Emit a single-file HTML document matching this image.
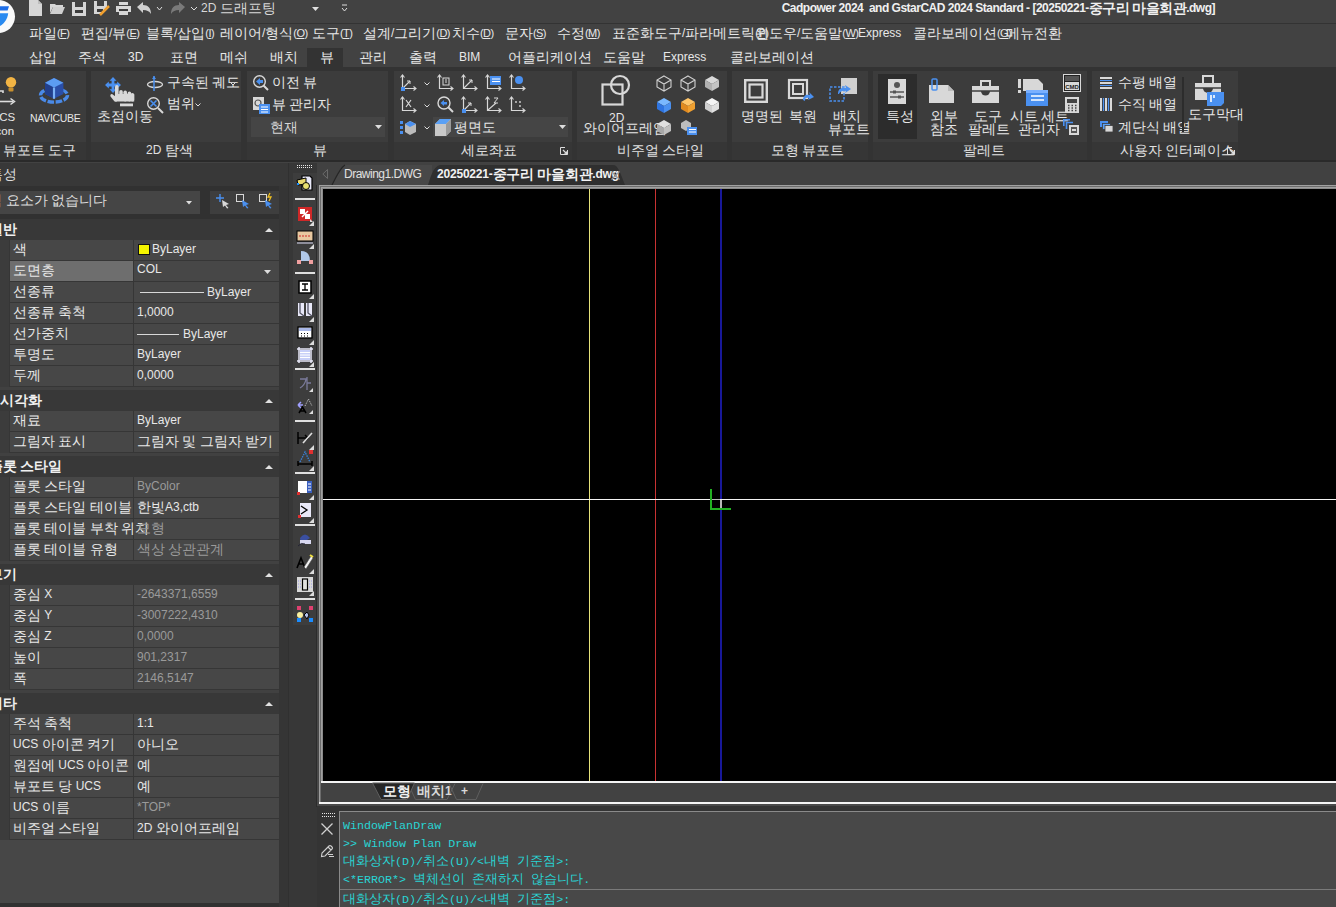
<!DOCTYPE html>
<html><head><meta charset="utf-8">
<style>
*{box-sizing:border-box;margin:0;padding:0}
html,body{width:1336px;height:907px;overflow:hidden;background:#3d3d3d}
body{position:relative;font-family:"Liberation Sans",sans-serif;color:#e6e6e6;font-size:12px}
.a{position:absolute}
.t{position:absolute;white-space:nowrap;line-height:1}
svg{position:absolute;overflow:visible}
.k{font-size:1.15em;line-height:0;position:relative;top:1px}
.km{font-family:'Liberation Sans',sans-serif;font-size:13.4px;line-height:0}
.m{font-family:"Liberation Mono",monospace}
</style></head><body>

<div class="a" style="left:0px;top:0px;width:1336px;height:23px;background:#424242;"></div>
<div class="a" style="left:0px;top:23px;width:1336px;height:1px;background:#333333;"></div>
<div class="a" style="left:0px;top:24px;width:1336px;height:43px;background:#424242;"></div>
<svg style="left:0px;top:0px" width="20" height="36" viewBox="0 0 20 36"><circle cx="-1.5" cy="16.5" r="16.5" fill="#fafafa"/><path d="M-8 6.2 H9 L7.6 10.6 H-8 Z" fill="#1f6fe8"/><path d="M-8 13.2 H8.2 C7.5 19 4 24 -1 26.5 H-8 Z" fill="#2a8af0"/></svg>
<svg style="left:29px;top:0px" width="14" height="16" viewBox="0 0 14 16"><path d="M0 0 H9 L13 4 V16 H0 Z" fill="#d6d6d6"/><path d="M9 0 V4 H13" fill="#bdbdbd"/></svg>
<svg style="left:50px;top:3px" width="15" height="11" viewBox="0 0 15 11"><path d="M0 1 H5 L6 2 H13 V4 H3 L0 10 Z" fill="#d6d6d6"/><path d="M3 4 H15 L12 11 H0 Z" fill="#cfcfcf"/></svg>
<svg style="left:72px;top:2px" width="15" height="14" viewBox="0 0 15 14"><path d="M0 0 H3 V5 H11 V0 H14 V14 H0 Z" fill="#d6d6d6"/><rect x="3" y="8" width="8" height="3" fill="#3c3c3c"/></svg>
<svg style="left:94px;top:1px" width="15" height="14" viewBox="0 0 15 14"><path d="M0 0 H3 V5 H10 V0 H13 V8 L8 13 H0 Z" fill="#d6d6d6"/><rect x="3" y="8" width="6" height="3" fill="#3c3c3c"/><path d="M6 14 L15 5" stroke="#f0a030" stroke-width="2.5"/></svg>
<svg style="left:116px;top:2px" width="15" height="13" viewBox="0 0 15 13"><rect x="3" y="0" width="9" height="3" fill="#d6d6d6"/><rect x="0" y="4" width="15" height="6" fill="#d6d6d6"/><rect x="3" y="7" width="9" height="2" fill="#3c3c3c"/><rect x="3" y="10" width="9" height="3" fill="#d6d6d6"/></svg>
<svg style="left:137px;top:2px" width="15" height="12" viewBox="0 0 15 12"><path d="M0 5 L6 0 V3 C11 3 14 6 14 12 C12 9 10 8 6 8 V11 Z" fill="#cfcfcf"/></svg>
<svg style="left:157px;top:7px" width="5" height="4" viewBox="0 0 5 4"><path d="M0 0 L2.5 3 L5 0" stroke="#ddd" fill="none" stroke-width="1"/></svg>
<svg style="left:170px;top:2px" width="15" height="12" viewBox="0 0 15 12"><path d="M15 5 L9 0 V3 C4 3 1 6 1 12 C3 9 5 8 9 8 V11 Z" fill="#7a7a7a"/></svg>
<svg style="left:191px;top:7px" width="6" height="4" viewBox="0 0 6 4"><path d="M0 0 L3 3 L6 0" stroke="#ddd" fill="none" stroke-width="1"/></svg>
<div class="a" style="left:199px;top:0px;width:126px;height:18px;background:#424242;"></div>
<div class="t" style="left:201px;top:2px;font-size:12px;color:#d8d8d8;font-weight:normal;">2D <span class="k">드래프팅</span></div>
<svg style="left:312px;top:7px" width="7" height="4" viewBox="0 0 7 4"><path d="M0 0 H7 L3.5 4 Z" fill="#e0e0e0"/></svg>
<svg style="left:342px;top:5px" width="5" height="8" viewBox="0 0 5 8"><path d="M0 0 H5 M0 3 L2.5 6 L5 3" stroke="#ddd" fill="none" stroke-width="1"/></svg>
<div class="t" style="right:121px;top:2px;font-size:12px;color:#f0f0f0;font-weight:bold;letter-spacing:-0.5px">Cadpower 2024&nbsp; and GstarCAD 2024 Standard - [20250221-<span class="k">중구리</span> <span class="k">마을회관</span>.dwg]</div>
<div class="t" style="left:29px;top:27px;font-size:12px;color:#e8e8e8;font-weight:normal;"><span class="k">파일</span><span style="font-size:11px;letter-spacing:-0.6px">(<u>F</u>)</span></div>
<div class="t" style="left:81px;top:27px;font-size:12px;color:#e8e8e8;font-weight:normal;"><span class="k">편집</span>/<span class="k">뷰</span><span style="font-size:11px;letter-spacing:-0.6px">(<u>E</u>)</span></div>
<div class="t" style="left:146px;top:27px;font-size:12px;color:#e8e8e8;font-weight:normal;"><span class="k">블록</span>/<span class="k">삽입</span><span style="font-size:11px;letter-spacing:-0.6px">(<u>I</u>)</span></div>
<div class="t" style="left:220px;top:27px;font-size:12px;color:#e8e8e8;font-weight:normal;"><span class="k">레이어</span>/<span class="k">형식</span><span style="font-size:11px;letter-spacing:-0.6px">(<u>O</u>)</span></div>
<div class="t" style="left:312px;top:27px;font-size:12px;color:#e8e8e8;font-weight:normal;"><span class="k">도구</span><span style="font-size:11px;letter-spacing:-0.6px">(<u>T</u>)</span></div>
<div class="t" style="left:363px;top:27px;font-size:12px;color:#e8e8e8;font-weight:normal;"><span class="k">설계</span>/<span class="k">그리기</span><span style="font-size:11px;letter-spacing:-0.6px">(<u>D</u>)</span></div>
<div class="t" style="left:452px;top:27px;font-size:12px;color:#e8e8e8;font-weight:normal;"><span class="k">치수</span><span style="font-size:11px;letter-spacing:-0.6px">(<u>D</u>)</span></div>
<div class="t" style="left:505px;top:27px;font-size:12px;color:#e8e8e8;font-weight:normal;"><span class="k">문자</span><span style="font-size:11px;letter-spacing:-0.6px">(<u>S</u>)</span></div>
<div class="t" style="left:557px;top:27px;font-size:12px;color:#e8e8e8;font-weight:normal;"><span class="k">수정</span><span style="font-size:11px;letter-spacing:-0.6px">(<u>M</u>)</span></div>
<div class="t" style="left:612px;top:27px;font-size:12px;color:#e8e8e8;font-weight:normal;"><span class="k">표준화도구</span>/<span class="k">파라메트릭</span><span style="font-size:11px;letter-spacing:-0.6px">(<u>P</u>)</span></div>
<div class="t" style="left:755px;top:27px;font-size:12px;color:#e8e8e8;font-weight:normal;"><span class="k">윈도우</span>/<span class="k">도움말</span><span style="font-size:11px;letter-spacing:-0.6px">(<u>W</u>)</span></div>
<div class="t" style="left:858px;top:27px;font-size:12px;color:#e8e8e8;font-weight:normal;">Express</div>
<div class="t" style="left:913px;top:27px;font-size:12px;color:#e8e8e8;font-weight:normal;"><span class="k">콜라보레이션</span><span style="font-size:11px;letter-spacing:-0.6px">(<u>G</u>)</span></div>
<div class="t" style="left:1006px;top:27px;font-size:12px;color:#e8e8e8;font-weight:normal;"><span class="k">메뉴전환</span></div>
<div class="a" style="left:307px;top:48px;width:36px;height:19px;background:#333333;"></div>
<div class="t" style="left:29px;top:51px;font-size:12px;color:#e8e8e8;font-weight:normal;"><span class="k">삽입</span></div>
<div class="t" style="left:78px;top:51px;font-size:12px;color:#e8e8e8;font-weight:normal;"><span class="k">주석</span></div>
<div class="t" style="left:128px;top:51px;font-size:12px;color:#e8e8e8;font-weight:normal;">3D</div>
<div class="t" style="left:170px;top:51px;font-size:12px;color:#e8e8e8;font-weight:normal;"><span class="k">표면</span></div>
<div class="t" style="left:220px;top:51px;font-size:12px;color:#e8e8e8;font-weight:normal;"><span class="k">메쉬</span></div>
<div class="t" style="left:270px;top:51px;font-size:12px;color:#e8e8e8;font-weight:normal;"><span class="k">배치</span></div>
<div class="t" style="left:320px;top:51px;font-size:12px;color:#e8e8e8;font-weight:normal;"><span class="k">뷰</span></div>
<div class="t" style="left:359px;top:51px;font-size:12px;color:#e8e8e8;font-weight:normal;"><span class="k">관리</span></div>
<div class="t" style="left:409px;top:51px;font-size:12px;color:#e8e8e8;font-weight:normal;"><span class="k">출력</span></div>
<div class="t" style="left:459px;top:51px;font-size:12px;color:#e8e8e8;font-weight:normal;">BIM</div>
<div class="t" style="left:508px;top:51px;font-size:12px;color:#e8e8e8;font-weight:normal;"><span class="k">어플리케이션</span></div>
<div class="t" style="left:603px;top:51px;font-size:12px;color:#e8e8e8;font-weight:normal;"><span class="k">도움말</span></div>
<div class="t" style="left:663px;top:51px;font-size:12px;color:#e8e8e8;font-weight:normal;">Express</div>
<div class="t" style="left:730px;top:51px;font-size:12px;color:#e8e8e8;font-weight:normal;"><span class="k">콜라보레이션</span></div>
<div class="a" style="left:0px;top:67px;width:1336px;height:94px;background:#333333;"></div>
<div class="a" style="left:0px;top:71px;width:86px;height:71px;background:#3c3c3c;"></div>
<div class="a" style="left:0px;top:142px;width:86px;height:18px;background:#363636;"></div>
<div class="t" style="left:3px;top:144px;font-size:12px;color:#e0e0e0;font-weight:normal;"><span class="k">뷰포트</span> <span class="k">도구</span></div>
<div class="a" style="left:91px;top:71px;width:150px;height:71px;background:#3c3c3c;"></div>
<div class="a" style="left:91px;top:142px;width:150px;height:18px;background:#363636;"></div>
<div class="t" style="left:146px;top:144px;font-size:12px;color:#e0e0e0;font-weight:normal;">2D <span class="k">탐색</span></div>
<div class="a" style="left:247px;top:71px;width:141px;height:71px;background:#3c3c3c;"></div>
<div class="a" style="left:247px;top:142px;width:141px;height:18px;background:#363636;"></div>
<div class="t" style="left:313px;top:144px;font-size:12px;color:#e0e0e0;font-weight:normal;"><span class="k">뷰</span></div>
<div class="a" style="left:394px;top:71px;width:178px;height:71px;background:#3c3c3c;"></div>
<div class="a" style="left:394px;top:142px;width:178px;height:18px;background:#363636;"></div>
<div class="t" style="left:461px;top:144px;font-size:12px;color:#e0e0e0;font-weight:normal;"><span class="k">세로좌표</span></div>
<div class="a" style="left:577px;top:71px;width:150px;height:71px;background:#3c3c3c;"></div>
<div class="a" style="left:577px;top:142px;width:150px;height:18px;background:#363636;"></div>
<div class="t" style="left:617px;top:144px;font-size:12px;color:#e0e0e0;font-weight:normal;"><span class="k">비주얼</span> <span class="k">스타일</span></div>
<div class="a" style="left:732px;top:71px;width:136px;height:71px;background:#3c3c3c;"></div>
<div class="a" style="left:732px;top:142px;width:136px;height:18px;background:#363636;"></div>
<div class="t" style="left:771px;top:144px;font-size:12px;color:#e0e0e0;font-weight:normal;"><span class="k">모형</span> <span class="k">뷰포트</span></div>
<div class="a" style="left:873px;top:71px;width:214px;height:71px;background:#3c3c3c;"></div>
<div class="a" style="left:873px;top:142px;width:214px;height:18px;background:#363636;"></div>
<div class="t" style="left:963px;top:144px;font-size:12px;color:#e0e0e0;font-weight:normal;"><span class="k">팔레트</span></div>
<div class="a" style="left:1092px;top:71px;width:146px;height:71px;background:#3c3c3c;"></div>
<div class="a" style="left:1092px;top:142px;width:146px;height:18px;background:#363636;"></div>
<div class="t" style="left:1120px;top:144px;font-size:12px;color:#e0e0e0;font-weight:normal;"><span class="k">사용자</span> <span class="k">인터페이스</span></div>
<div class="a" style="left:0px;top:160px;width:1336px;height:2px;background:#2a2a2a;"></div>
<div class="a" style="left:0px;top:162px;width:1336px;height:1px;background:#424242;"></div>
<svg style="left:560px;top:147px" width="8" height="8" viewBox="0 0 8 8"><path d="M0.5 0.5 H5 M0.5 0.5 V7.5 H7.5 V3" stroke="#ddd" fill="none"/><path d="M3 3 L7 7 M4 7 H7 V4" stroke="#ddd" fill="none" stroke-width="1.2"/></svg>
<svg style="left:1227px;top:147px" width="8" height="8" viewBox="0 0 8 8"><path d="M0.5 0.5 H5 M0.5 0.5 V7.5 H7.5 V3" stroke="#ddd" fill="none"/><path d="M3 3 L7 7 M4 7 H7 V4" stroke="#ddd" fill="none" stroke-width="1.2"/></svg>
<svg style="left:0px;top:76px" width="18" height="30" viewBox="0 0 18 30"><circle cx="11" cy="6.2" r="5.2" fill="#f2b444"/><rect x="8.5" y="11.5" width="5" height="4" rx="1" fill="#c8902e"/><path d="M0 15 H3 V17" stroke="#ddd" stroke-width="1.6" fill="none"/><path d="M0 25.5 H13" stroke="#ddd" stroke-width="1.6"/><path d="M10.5 22.5 L14.5 25.5 L10.5 28.5" stroke="#ddd" stroke-width="1.5" fill="none"/></svg>
<div class="t" style="left:-9px;top:112px;font-size:11.5px;color:#e6e6e6;font-weight:normal;">UCS</div>
<div class="t" style="left:-7px;top:126px;font-size:11.5px;color:#e6e6e6;font-weight:normal;">icon</div>
<svg style="left:38px;top:77px" width="32" height="28" viewBox="0 0 32 28"><ellipse cx="16" cy="18.3" rx="13.5" ry="6.8" fill="none" stroke="#4a8ae8" stroke-width="3.4" stroke-dasharray="6.5 1.6"/><path d="M16 1 L25.4 5.8 V17 L16 21.8 L7 17 V5.8 Z" fill="#2a4ea8"/><path d="M7 5.8 L16 10.5 V21.8 L7 17 Z" fill="#223f8c"/><path d="M16 1 L25.4 5.8 L16 10.5 L7 5.8 Z" fill="#5c9cf2"/><path d="M16 10.5 V21.8" stroke="#7ab0f5" stroke-width="2.2"/></svg>
<div class="t" style="left:30px;top:113px;font-size:10.5px;color:#e6e6e6;font-weight:normal;letter-spacing:-0.3px">NAVICUBE</div>
<svg style="left:105px;top:77px" width="31" height="30" viewBox="0 0 31 30"><path d="M8 0 L11.5 3.8 H9.4 V6.6 H12.2 V4.5 L16 8 L12.2 11.5 V9.4 H9.4 V12.2 H11.5 L8 16 L4.5 12.2 H6.6 V9.4 H3.8 V11.5 L0 8 L3.8 4.5 V6.6 H6.6 V3.8 H4.5 Z" fill="#4a90f0"/><g fill="#d8d8d8"><rect x="10" y="8" width="3.6" height="16" rx="1.8"/><rect x="14.2" y="13" width="3.6" height="11" rx="1.8"/><rect x="18.4" y="13.5" width="3.6" height="11" rx="1.8"/><rect x="22.6" y="14.5" width="3.6" height="10" rx="1.8"/><rect x="25.6" y="16" width="3.6" height="8.5" rx="1.8"/><rect x="10" y="17" width="19.2" height="7.5"/><path d="M10.5 19.5 L7 17 Q4.8 17 5.5 19.5 L9.5 24.5 H12 Z"/></g><rect x="15" y="26.5" width="13" height="2.8" fill="#d8d8d8"/></svg>
<div class="t" style="left:97px;top:110px;font-size:12px;color:#e6e6e6;font-weight:normal;"><span class="k">초점이동</span></div>
<svg style="left:147px;top:76px" width="16" height="15" viewBox="0 0 16 15"><ellipse cx="8" cy="8.5" rx="7.5" ry="3" fill="none" stroke="#d8d8d8" stroke-width="1.3"/><path d="M7 0 V15" stroke="#4a90f0" stroke-width="1.5"/><path d="M5 3 L7 0 L9 3" fill="#4a90f0"/></svg>
<div class="t" style="left:167px;top:76px;font-size:12px;color:#e6e6e6;font-weight:normal;"><span class="k">구속된</span> <span class="k">궤도</span></div>
<svg style="left:230px;top:82px" width="6" height="4" viewBox="0 0 6 4"><path d="M0.5 0.5 L3 3 L5.5 0.5" stroke="#ddd" fill="none"/></svg>
<svg style="left:147px;top:97px" width="17" height="17" viewBox="0 0 17 17"><circle cx="6.5" cy="6.5" r="5.8" fill="none" stroke="#d8d8d8" stroke-width="1.4"/><path d="M11 11 L16 16" stroke="#d8d8d8" stroke-width="2"/><path d="M3.5 3.5 L9.5 9.5 M9.5 3.5 L3.5 9.5" stroke="#4a90f0" stroke-width="1.6"/></svg>
<div class="t" style="left:167px;top:97px;font-size:12px;color:#e6e6e6;font-weight:normal;"><span class="k">범위</span></div>
<svg style="left:195px;top:103px" width="6" height="4" viewBox="0 0 6 4"><path d="M0.5 0.5 L3 3 L5.5 0.5" stroke="#ddd" fill="none"/></svg>
<svg style="left:253px;top:75px" width="16" height="15" viewBox="0 0 16 15"><circle cx="6.5" cy="6.5" r="5.8" fill="none" stroke="#d8d8d8" stroke-width="1.4"/><path d="M10.5 10.5 L15 15" stroke="#d8d8d8" stroke-width="2"/><path d="M3 6.5 L7 3 V5 H10 V8 H7 V10 Z" fill="#4a90f0"/></svg>
<div class="t" style="left:272px;top:76px;font-size:12px;color:#e6e6e6;font-weight:normal;"><span class="k">이전</span> <span class="k">뷰</span></div>
<svg style="left:253px;top:97px" width="17" height="17" viewBox="0 0 17 17"><rect x="0" y="0" width="11" height="13" fill="#d8d8d8"/><circle cx="5" cy="6" r="3" fill="none" stroke="#555" stroke-width="1.2"/><rect x="6" y="7" width="11" height="10" fill="#4a90f0"/><path d="M8 10 H15 M8 12.5 H15 M8 15 H15" stroke="#fff" stroke-width="1"/></svg>
<div class="t" style="left:272px;top:98px;font-size:12px;color:#e6e6e6;font-weight:normal;"><span class="k">뷰</span> <span class="k">관리자</span></div>
<div class="a" style="left:251px;top:117px;width:134px;height:20px;background:#454545;"></div>
<div class="t" style="left:270px;top:121px;font-size:12px;color:#d6d6d6;font-weight:normal;"><span class="k">현재</span></div>
<svg style="left:375px;top:125px" width="7" height="4" viewBox="0 0 7 4"><path d="M0 0 H7 L3.5 4 Z" fill="#ddd"/></svg>
<svg style="left:400px;top:75px" width="16" height="16" viewBox="0 0 16 16"><path d="M2.5 0 V13.5 H16" stroke="#d8d8d8" stroke-width="1.2" fill="none"/><path d="M0.5 2.5 L2.5 0 L4.5 2.5 M13.5 11.5 L16 13.5 L13.5 15.5" stroke="#d8d8d8" stroke-width="1.1" fill="none"/><path d="M3 13 L10 6" stroke="#d8d8d8" stroke-width="1.1"/><path d="M7 6 H10 V9" stroke="#d8d8d8" fill="none"/><rect x="1" y="12" width="4" height="4" fill="#4a90f0"/></svg>
<svg style="left:424px;top:82px" width="6" height="4" viewBox="0 0 6 4"><path d="M0.5 0.5 L3 3 L5.5 0.5" stroke="#ddd" fill="none"/></svg>
<svg style="left:437px;top:75px" width="16" height="16" viewBox="0 0 16 16"><path d="M2.5 0 V13.5 H16" stroke="#d8d8d8" stroke-width="1.2" fill="none"/><path d="M0.5 2.5 L2.5 0 L4.5 2.5 M13.5 11.5 L16 13.5 L13.5 15.5" stroke="#d8d8d8" stroke-width="1.1" fill="none"/><rect x="6" y="3" width="6" height="7" fill="none" stroke="#d8d8d8"/><path d="M8 5 H10 M8 7 H10" stroke="#d8d8d8"/></svg>
<svg style="left:461px;top:75px" width="16" height="16" viewBox="0 0 16 16"><path d="M2.5 0 V13.5 H16" stroke="#d8d8d8" stroke-width="1.2" fill="none"/><path d="M0.5 2.5 L2.5 0 L4.5 2.5 M13.5 11.5 L16 13.5 L13.5 15.5" stroke="#d8d8d8" stroke-width="1.1" fill="none"/><path d="M3 13 L11 5" stroke="#d8d8d8" stroke-width="1.1"/><path d="M8 5 H11 V8" stroke="#d8d8d8" fill="none"/></svg>
<svg style="left:485px;top:75px" width="16" height="16" viewBox="0 0 16 16"><path d="M2.5 0 V13.5 H16" stroke="#d8d8d8" stroke-width="1.2" fill="none"/><path d="M0.5 2.5 L2.5 0 L4.5 2.5 M13.5 11.5 L16 13.5 L13.5 15.5" stroke="#d8d8d8" stroke-width="1.1" fill="none"/><rect x="5" y="1" width="11" height="9" fill="#4a90f0"/><path d="M7 4 H15 M7 6.5 H15" stroke="#fff"/></svg>
<svg style="left:509px;top:75px" width="16" height="16" viewBox="0 0 16 16"><path d="M2.5 0 V13.5 H16" stroke="#d8d8d8" stroke-width="1.2" fill="none"/><path d="M0.5 2.5 L2.5 0 L4.5 2.5 M13.5 11.5 L16 13.5 L13.5 15.5" stroke="#d8d8d8" stroke-width="1.1" fill="none"/><circle cx="10" cy="5" r="4" fill="#4a90f0"/></svg>
<svg style="left:400px;top:97px" width="16" height="16" viewBox="0 0 16 16"><path d="M2.5 0 V13.5 H16" stroke="#d8d8d8" stroke-width="1.2" fill="none"/><path d="M0.5 2.5 L2.5 0 L4.5 2.5 M13.5 11.5 L16 13.5 L13.5 15.5" stroke="#d8d8d8" stroke-width="1.1" fill="none"/><path d="M6 3 L11 10 M11 3 L6 10" stroke="#d8d8d8" stroke-width="1.2"/></svg>
<svg style="left:424px;top:104px" width="6" height="4" viewBox="0 0 6 4"><path d="M0.5 0.5 L3 3 L5.5 0.5" stroke="#ddd" fill="none"/></svg>
<svg style="left:437px;top:96px" width="17" height="17" viewBox="0 0 17 17"><circle cx="7" cy="7" r="6" fill="none" stroke="#d8d8d8" stroke-width="1.4"/><path d="M11.5 11.5 L16 16" stroke="#d8d8d8" stroke-width="2"/><path d="M3.5 7 L7 4 V6 H10 V8.5 H7 V10 Z" fill="#4a90f0"/></svg>
<svg style="left:461px;top:97px" width="16" height="16" viewBox="0 0 16 16"><path d="M2.5 0 V13.5 H16" stroke="#d8d8d8" stroke-width="1.2" fill="none"/><path d="M0.5 2.5 L2.5 0 L4.5 2.5 M13.5 11.5 L16 13.5 L13.5 15.5" stroke="#d8d8d8" stroke-width="1.1" fill="none"/><path d="M3 13 L10 6" stroke="#d8d8d8" stroke-width="1.1"/><path d="M7 6 H10 V9" stroke="#d8d8d8" fill="none"/><rect x="1" y="12" width="4" height="4" fill="#4a90f0"/></svg>
<svg style="left:485px;top:97px" width="16" height="16" viewBox="0 0 16 16"><path d="M2.5 0 V13.5 H16" stroke="#d8d8d8" stroke-width="1.2" fill="none"/><path d="M0.5 2.5 L2.5 0 L4.5 2.5 M13.5 11.5 L16 13.5 L13.5 15.5" stroke="#d8d8d8" stroke-width="1.1" fill="none"/><path d="M3 13 L11 6" stroke="#d8d8d8" stroke-width="1.1"/><path d="M9 1 H13 L9 6 H13" stroke="#d8d8d8" fill="none"/></svg>
<svg style="left:509px;top:97px" width="16" height="16" viewBox="0 0 16 16"><path d="M2.5 0 V13.5 H16" stroke="#d8d8d8" stroke-width="1.2" fill="none"/><path d="M0.5 2.5 L2.5 0 L4.5 2.5 M13.5 11.5 L16 13.5 L13.5 15.5" stroke="#d8d8d8" stroke-width="1.1" fill="none"/><circle cx="7" cy="5" r="0.9" fill="#d8d8d8"/><circle cx="11" cy="5" r="0.9" fill="#d8d8d8"/><circle cx="11" cy="9" r="0.9" fill="#d8d8d8"/></svg>
<svg style="left:400px;top:120px" width="17" height="15" viewBox="0 0 17 15"><rect x="0" y="1" width="3" height="3" fill="#4a90f0"/><rect x="0" y="6" width="3" height="3" fill="#4a90f0"/><rect x="0" y="11" width="3" height="3" fill="#4a90f0"/><path d="M5 4 L10 1 L16 4 V12 L10 15 L5 12 Z" fill="#bbb"/><path d="M5 4 L10 1 L16 4 L10 7 Z" fill="#4a90f0"/></svg>
<svg style="left:424px;top:126px" width="6" height="4" viewBox="0 0 6 4"><path d="M0.5 0.5 L3 3 L5.5 0.5" stroke="#ddd" fill="none"/></svg>
<div class="a" style="left:433px;top:117px;width:135px;height:20px;background:#454545;"></div>
<svg style="left:435px;top:119px" width="16" height="17" viewBox="0 0 16 17"><path d="M0 5 L5 0 H16 V12 L11 17 H0 Z" fill="#c8c8c8"/><path d="M0 5 L5 0 H16 L11 5 Z" fill="#5aa0f5"/><path d="M11 5 V17 L16 12 V0 Z" fill="#9a9a9a"/></svg>
<div class="t" style="left:454px;top:121px;font-size:12px;color:#e6e6e6;font-weight:normal;"><span class="k">평면도</span></div>
<svg style="left:559px;top:125px" width="7" height="4" viewBox="0 0 7 4"><path d="M0 0 H7 L3.5 4 Z" fill="#ddd"/></svg>
<svg style="left:601px;top:75px" width="31" height="32" viewBox="0 0 31 32"><rect x="1.5" y="9.5" width="20" height="20" fill="none" stroke="#d8d8d8" stroke-width="2.2"/><circle cx="19" cy="10" r="9" fill="none" stroke="#d8d8d8" stroke-width="2.2"/></svg>
<div class="t" style="left:609px;top:112px;font-size:12px;color:#e6e6e6;font-weight:normal;">2D</div>
<div class="t" style="left:583px;top:122px;font-size:12px;color:#e6e6e6;font-weight:normal;"><span class="k">와이어프레임</span></div>
<svg style="left:656px;top:75px" width="16" height="17" viewBox="0 0 16 17"><path d="M8 1 L15 5 V12 L8 16 L1 12 V5 Z M1 5 L8 9 L15 5 M8 9 V16" fill="none" stroke="#d0d0d0" stroke-width="1.1"/></svg>
<svg style="left:680px;top:75px" width="16" height="17" viewBox="0 0 16 17"><path d="M8 1 L15 5 V12 L8 16 L1 12 V5 Z M1 5 L8 9 L15 5 M8 9 V16" fill="none" stroke="#d0d0d0" stroke-width="1.1"/></svg>
<svg style="left:704px;top:75px" width="16" height="17" viewBox="0 0 16 17"><path d="M8 1 L15 5 L8 9 L1 5 Z" fill="#d8d8d8"/><path d="M1 5 L8 9 V16 L1 12 Z" fill="#b0b0b0"/><path d="M15 5 L8 9 V16 L15 12 Z" fill="#c4c4c4"/></svg>
<svg style="left:656px;top:97px" width="16" height="17" viewBox="0 0 16 17"><path d="M8 1 L15 5 L8 9 L1 5 Z" fill="#7ab8ff"/><path d="M1 5 L8 9 V16 L1 12 Z" fill="#2f74e0"/><path d="M15 5 L8 9 V16 L15 12 Z" fill="#4a90f0"/></svg>
<svg style="left:680px;top:97px" width="16" height="17" viewBox="0 0 16 17"><path d="M8 1 L15 5 L8 9 L1 5 Z" fill="#ffc66a"/><path d="M1 5 L8 9 V16 L1 12 Z" fill="#e08a20"/><path d="M15 5 L8 9 V16 L15 12 Z" fill="#f0a030"/></svg>
<svg style="left:704px;top:97px" width="16" height="17" viewBox="0 0 16 17"><path d="M8 1 L15 5 L8 9 L1 5 Z" fill="#f4f4f4"/><path d="M1 5 L8 9 V16 L1 12 Z" fill="#cfcfcf"/><path d="M15 5 L8 9 V16 L15 12 Z" fill="#e0e0e0"/></svg>
<svg style="left:656px;top:119px" width="16" height="17" viewBox="0 0 16 17"><path d="M8 1 L15 5 L8 9 L1 5 Z" fill="#e0e0e0"/><path d="M1 5 L8 9 V16 L1 12 Z" fill="#a8a8a8"/><path d="M15 5 L8 9 V16 L15 12 Z" fill="#c0c0c0"/></svg>
<svg style="left:680px;top:119px" width="17" height="17" viewBox="0 0 17 17"><path d="M6 1 L11 4 V9 L6 12 L1 9 V4 Z" fill="#bdbdbd"/><rect x="7" y="8" width="10" height="8" fill="#4a90f0"/><path d="M9 10.5 H16 M9 13 H16" stroke="#fff"/></svg>
<svg style="left:744px;top:79px" width="24" height="24" viewBox="0 0 24 24"><rect x="1.2" y="1.2" width="21.6" height="21.6" fill="none" stroke="#d8d8d8" stroke-width="2.4"/><rect x="5.5" y="5.5" width="13" height="13" fill="none" stroke="#d8d8d8" stroke-width="2.2"/></svg>
<div class="t" style="left:741px;top:110px;font-size:12px;color:#e6e6e6;font-weight:normal;"><span class="k">명명된</span></div>
<svg style="left:788px;top:79px" width="26" height="25" viewBox="0 0 26 25"><rect x="1" y="1" width="18" height="18" fill="none" stroke="#d8d8d8" stroke-width="2.2"/><rect x="5" y="5" width="10" height="10" fill="none" stroke="#d8d8d8" stroke-width="2"/><path d="M15 21 C15 17 18 15 22 16 L21 13 L26 18 L20 21 L21 19 C18 18 17 19 17 22 Z" fill="#4a90f0"/></svg>
<div class="t" style="left:789px;top:110px;font-size:12px;color:#e6e6e6;font-weight:normal;"><span class="k">복원</span></div>
<svg style="left:829px;top:78px" width="28" height="24" viewBox="0 0 28 24"><rect x="12" y="0" width="16" height="16" fill="#d0d0d0"/><rect x="1" y="9" width="14" height="14" fill="none" stroke="#4a90f0" stroke-width="1.5" stroke-dasharray="2.5 1.5"/><path d="M9 16 C9 11 12 9 17 10 L16 7 L22 11 L16 15 L17 13 C13 12 11 14 10 16 Z" fill="#4a90f0"/></svg>
<div class="t" style="left:833px;top:110px;font-size:12px;color:#e6e6e6;font-weight:normal;"><span class="k">배치</span></div>
<div class="t" style="left:828px;top:123px;font-size:12px;color:#e6e6e6;font-weight:normal;"><span class="k">뷰포트</span></div>
<div class="a" style="left:878px;top:74px;width:39px;height:65px;background:#2c2c2c;"></div>
<svg style="left:887px;top:78px" width="20" height="27" viewBox="0 0 20 27"><rect x="1" y="1" width="18" height="25" fill="#d8d8d8" stroke="#2c2c2c" stroke-width="0"/><circle cx="10" cy="7" r="3" fill="#555"/><path d="M3 14 H17 M3 19 H17" stroke="#555" stroke-width="1.6"/><rect x="6" y="12.5" width="3" height="3" fill="#555"/><rect x="11" y="17.5" width="3" height="3" fill="#555"/></svg>
<div class="t" style="left:886px;top:110px;font-size:12px;color:#e6e6e6;font-weight:normal;"><span class="k">특성</span></div>
<svg style="left:929px;top:79px" width="26" height="24" viewBox="0 0 26 24"><path d="M0 6 H19 L25 12 V24 H0 Z" fill="#d8d8d8"/><path d="M19 6 V12 H25" fill="#bcbcbc"/><rect x="3" y="0" width="5" height="11" rx="1" fill="none" stroke="#4a90f0" stroke-width="1.5"/></svg>
<div class="t" style="left:930px;top:110px;font-size:12px;color:#e6e6e6;font-weight:normal;"><span class="k">외부</span></div>
<div class="t" style="left:930px;top:123px;font-size:12px;color:#e6e6e6;font-weight:normal;"><span class="k">참조</span></div>
<svg style="left:972px;top:81px" width="27" height="22" viewBox="0 0 27 22"><rect x="0" y="5" width="27" height="17" fill="#d8d8d8"/><rect x="9" y="0" width="9" height="6" fill="none" stroke="#d8d8d8" stroke-width="2"/><path d="M0 10 H27" stroke="#3c3c3c" stroke-width="1.5"/><path d="M9 10 A4.5 4.5 0 0 0 18 10" fill="#3c3c3c"/></svg>
<div class="t" style="left:974px;top:110px;font-size:12px;color:#e6e6e6;font-weight:normal;"><span class="k">도구</span></div>
<div class="t" style="left:968px;top:123px;font-size:12px;color:#e6e6e6;font-weight:normal;"><span class="k">팔레트</span></div>
<svg style="left:1018px;top:79px" width="30" height="27" viewBox="0 0 30 27"><rect x="0" y="0" width="3" height="9" fill="#d8d8d8"/><rect x="0" y="11" width="3" height="3" fill="#d8d8d8"/><path d="M5 0 H20 L25 5 V12 H5 Z" fill="#d8d8d8"/><rect x="8" y="11" width="22" height="16" fill="#4a90f0"/><rect x="8" y="11" width="22" height="3" fill="#7ab0ff"/><path d="M13 17 H26 M13 21 H26" stroke="#fff" stroke-width="1.6"/></svg>
<div class="t" style="left:1010px;top:110px;font-size:12px;color:#e6e6e6;font-weight:normal;"><span class="k">시트</span> <span class="k">세트</span></div>
<div class="t" style="left:1018px;top:123px;font-size:12px;color:#e6e6e6;font-weight:normal;"><span class="k">관리자</span></div>
<svg style="left:1063px;top:74px" width="18" height="18" viewBox="0 0 18 18"><rect x="0.5" y="0.5" width="17" height="17" fill="#222" stroke="#d8d8d8"/><rect x="2" y="2" width="14" height="5" fill="#555"/><rect x="2" y="8" width="14" height="8" fill="#d8d8d8"/><text x="9" y="14.5" font-size="6" font-family="Liberation Sans" font-weight="bold" text-anchor="middle" fill="#222">CMD</text></svg>
<svg style="left:1065px;top:97px" width="14" height="16" viewBox="0 0 14 16"><rect x="0" y="0" width="14" height="16" fill="#d8d8d8"/><rect x="2" y="2" width="10" height="4" fill="#444"/><path d="M3 8.5 H4.5 M6.5 8.5 H8 M10 8.5 H11.5 M3 11 H4.5 M6.5 11 H8 M10 11 H11.5 M3 13.5 H4.5 M6.5 13.5 H8 M10 13.5 H11.5" stroke="#444" stroke-width="1.4"/></svg>
<svg style="left:1063px;top:119px" width="16" height="16" viewBox="0 0 16 16"><path d="M0.8 7 V0.8 H7" stroke="#4a90f0" stroke-width="1.6" fill="none"/><path d="M3.5 10 V3.5 H10" stroke="#4a90f0" stroke-width="1.6" fill="none"/><rect x="6" y="6" width="10" height="10" fill="#d8d8d8"/><path d="M8.5 9.5 H13.5 M8.5 12.5 H13.5" stroke="#555" stroke-width="1.2"/><rect x="8.5" y="8.5" width="5" height="5" fill="none" stroke="#555"/></svg>
<svg style="left:1100px;top:77px" width="12" height="12" viewBox="0 0 12 12"><path d="M0 1 H12 M0 6 H12 M0 11 H12" stroke="#d8d8d8" stroke-width="2"/><path d="M0 3.5 H12 M0 8.5 H12" stroke="#4a90f0" stroke-width="1.2"/></svg>
<div class="t" style="left:1118px;top:76px;font-size:12px;color:#e6e6e6;font-weight:normal;"><span class="k">수평</span> <span class="k">배열</span></div>
<svg style="left:1100px;top:98px" width="12" height="13" viewBox="0 0 12 13"><path d="M1 0 V13 M6 0 V13 M11 0 V13" stroke="#d8d8d8" stroke-width="2"/><path d="M3.5 0 V13 M8.5 0 V13" stroke="#4a90f0" stroke-width="1.2"/></svg>
<div class="t" style="left:1118px;top:98px;font-size:12px;color:#e6e6e6;font-weight:normal;"><span class="k">수직</span> <span class="k">배열</span></div>
<svg style="left:1100px;top:121px" width="13" height="11" viewBox="0 0 13 11"><rect x="0" y="0" width="8" height="6" fill="#4a90f0"/><rect x="2.5" y="2.5" width="8" height="6" fill="#5aa0f5" stroke="#3c3c3c" stroke-width="0.8"/><rect x="5" y="4.5" width="8" height="6.5" fill="#d8d8d8" stroke="#3c3c3c" stroke-width="0.8"/></svg>
<div class="t" style="left:1118px;top:121px;font-size:12px;color:#e6e6e6;font-weight:normal;"><span class="k">계단식</span> <span class="k">배열</span></div>
<div class="a" style="left:1182px;top:77px;width:2px;height:55px;background:#2c2c2c;"></div>
<svg style="left:1195px;top:76px" width="30" height="30" viewBox="0 0 30 30"><rect x="0" y="7" width="26" height="17" fill="#d8d8d8"/><rect x="8" y="0" width="10" height="8" fill="none" stroke="#d8d8d8" stroke-width="2"/><path d="M0 12 H26" stroke="#3c3c3c" stroke-width="1.5"/><path d="M8 12 A5 5 0 0 0 18 12" fill="#3c3c3c"/><path d="M12 16 H29 V27 L26 30 H12 Z" fill="#4a90f0"/><path d="M16 19 V26 M19 19 V22" stroke="#fff" stroke-width="1.6"/></svg>
<div class="t" style="left:1188px;top:108px;font-size:12px;color:#e6e6e6;font-weight:normal;"><span class="k">도구막대</span></div>
<div class="a" style="left:0px;top:163px;width:1336px;height:744px;background:#3a3a3a;"></div>
<div class="a" style="left:0px;top:163px;width:288px;height:23px;background:#383838;"></div>
<div class="t" style="right:1319px;top:168px;font-size:12px;color:#dcdcdc;font-weight:normal;"><span class="k">특성</span></div>
<div class="a" style="left:0px;top:186px;width:288px;height:721px;background:#313131;"></div>
<div class="a" style="left:0px;top:191px;width:200px;height:23px;background:#454545;"></div>
<div class="t" style="right:1229px;top:194px;font-size:12px;color:#dcdcdc;font-weight:normal;"><span class="k">선택</span> <span class="k">요소가</span> <span class="k">없습니다</span></div>
<svg style="left:186px;top:201px" width="6" height="4" viewBox="0 0 6 4"><path d="M0 0 H6 L3 3.5 Z" fill="#ddd"/></svg>
<div class="a" style="left:210px;top:191px;width:69px;height:23px;background:#3e3e3e;"></div>
<svg style="left:216px;top:194px" width="14" height="14" viewBox="0 0 14 14"><path d="M4 0 V8 M0 4 H8" stroke="#4a90f0" stroke-width="1.4"/><path d="M6 6 L13 10 L10 11 L12.5 14 L11 14.5 L9 11.5 L7 13 Z" fill="#d8d8d8"/></svg>
<svg style="left:236px;top:194px" width="14" height="14" viewBox="0 0 14 14"><rect x="0.5" y="0.5" width="7" height="7" fill="none" stroke="#d8d8d8"/><path d="M6 6 L13 10 L10 11 L12.5 14 L11 14.5 L9 11.5 L7 13 Z" fill="#4a90f0"/></svg>
<svg style="left:259px;top:193px" width="15" height="15" viewBox="0 0 15 15"><rect x="0.5" y="1.5" width="7" height="7" fill="none" stroke="#d8d8d8"/><path d="M11 0 L9 4 H12 L10 8" stroke="#f0c020" stroke-width="1.3" fill="none"/><path d="M6 7 L13 11 L10 12 L12.5 15 L11 15.5 L9 12.5 L7 14 Z" fill="#4a90f0"/></svg>
<div class="a" style="left:0px;top:219px;width:279px;height:21px;background:#383838;"></div>
<div class="t" style="right:1319px;top:223px;font-size:12px;color:#f0f0f0;font-weight:bold;"><span class="k">일반</span></div>
<svg style="left:265px;top:228px" width="8" height="4" viewBox="0 0 8 4"><path d="M0 4 L4 0 L8 4 Z" fill="#e0e0e0"/></svg>
<div class="a" style="left:0px;top:240px;width:279px;height:147px;background:#3c3c3c;"></div>
<div class="a" style="left:9px;top:240px;width:270px;height:21px;background:#363636;"></div>
<div class="a" style="left:10px;top:240px;width:123px;height:20px;background:#474747;"></div>
<div class="a" style="left:134px;top:240px;width:145px;height:20px;background:#474747;"></div>
<div class="t" style="left:13px;top:243px;font-size:12px;color:#e8e8e8;font-weight:normal;"><span class="k">색</span></div>
<div class="a" style="left:138px;top:244px;width:12px;height:11px;background:#111;"></div>
<div class="a" style="left:139px;top:245px;width:10px;height:9px;background:#f5f500;"></div>
<div class="t" style="left:152px;top:243px;font-size:12px;color:#e8e8e8;font-weight:normal;">ByLayer</div>
<div class="a" style="left:9px;top:261px;width:270px;height:21px;background:#363636;"></div>
<div class="a" style="left:10px;top:261px;width:123px;height:20px;background:#6e6e6e;"></div>
<div class="a" style="left:134px;top:261px;width:145px;height:20px;background:#474747;"></div>
<div class="t" style="left:13px;top:264px;font-size:12px;color:#e8e8e8;font-weight:normal;"><span class="k">도면층</span></div>
<div class="t" style="left:137px;top:263px;font-size:12px;color:#e8e8e8;font-weight:normal;">COL</div>
<svg style="left:264px;top:270px" width="7" height="4" viewBox="0 0 7 4"><path d="M0 0 H7 L3.5 4 Z" fill="#ddd"/></svg>
<div class="a" style="left:9px;top:282px;width:270px;height:21px;background:#363636;"></div>
<div class="a" style="left:10px;top:282px;width:123px;height:20px;background:#474747;"></div>
<div class="a" style="left:134px;top:282px;width:145px;height:20px;background:#474747;"></div>
<div class="t" style="left:13px;top:285px;font-size:12px;color:#e8e8e8;font-weight:normal;"><span class="k">선종류</span></div>
<div class="a" style="left:140px;top:292px;width:64px;height:1px;background:#d8d8d8;"></div>
<div class="t" style="left:207px;top:286px;font-size:12px;color:#e8e8e8;font-weight:normal;">ByLayer</div>
<div class="a" style="left:9px;top:303px;width:270px;height:21px;background:#363636;"></div>
<div class="a" style="left:10px;top:303px;width:123px;height:20px;background:#474747;"></div>
<div class="a" style="left:134px;top:303px;width:145px;height:20px;background:#474747;"></div>
<div class="t" style="left:13px;top:306px;font-size:12px;color:#e8e8e8;font-weight:normal;"><span class="k">선종류</span> <span class="k">축척</span></div>
<div class="t" style="left:137px;top:306px;font-size:12px;color:#e8e8e8;font-weight:normal;">1,0000</div>
<div class="a" style="left:9px;top:324px;width:270px;height:21px;background:#363636;"></div>
<div class="a" style="left:10px;top:324px;width:123px;height:20px;background:#474747;"></div>
<div class="a" style="left:134px;top:324px;width:145px;height:20px;background:#474747;"></div>
<div class="t" style="left:13px;top:327px;font-size:12px;color:#e8e8e8;font-weight:normal;"><span class="k">선가중치</span></div>
<div class="a" style="left:137px;top:334px;width:42px;height:1px;background:#d8d8d8;"></div>
<div class="t" style="left:183px;top:328px;font-size:12px;color:#e8e8e8;font-weight:normal;">ByLayer</div>
<div class="a" style="left:9px;top:345px;width:270px;height:21px;background:#363636;"></div>
<div class="a" style="left:10px;top:345px;width:123px;height:20px;background:#474747;"></div>
<div class="a" style="left:134px;top:345px;width:145px;height:20px;background:#474747;"></div>
<div class="t" style="left:13px;top:348px;font-size:12px;color:#e8e8e8;font-weight:normal;"><span class="k">투명도</span></div>
<div class="t" style="left:137px;top:348px;font-size:12px;color:#e8e8e8;font-weight:normal;">ByLayer</div>
<div class="a" style="left:9px;top:366px;width:270px;height:21px;background:#363636;"></div>
<div class="a" style="left:10px;top:366px;width:123px;height:20px;background:#474747;"></div>
<div class="a" style="left:134px;top:366px;width:145px;height:20px;background:#474747;"></div>
<div class="t" style="left:13px;top:369px;font-size:12px;color:#e8e8e8;font-weight:normal;"><span class="k">두께</span></div>
<div class="t" style="left:137px;top:369px;font-size:12px;color:#e8e8e8;font-weight:normal;">0,0000</div>
<div class="a" style="left:0px;top:387px;width:279px;height:3px;background:#414141;"></div>
<div class="a" style="left:0px;top:390px;width:279px;height:21px;background:#383838;"></div>
<div class="t" style="right:1294px;top:394px;font-size:12px;color:#f0f0f0;font-weight:bold;">3D <span class="k">시각화</span></div>
<svg style="left:265px;top:399px" width="8" height="4" viewBox="0 0 8 4"><path d="M0 4 L4 0 L8 4 Z" fill="#e0e0e0"/></svg>
<div class="a" style="left:0px;top:411px;width:279px;height:42px;background:#3c3c3c;"></div>
<div class="a" style="left:9px;top:411px;width:270px;height:21px;background:#363636;"></div>
<div class="a" style="left:10px;top:411px;width:123px;height:20px;background:#474747;"></div>
<div class="a" style="left:134px;top:411px;width:145px;height:20px;background:#474747;"></div>
<div class="t" style="left:13px;top:414px;font-size:12px;color:#e8e8e8;font-weight:normal;"><span class="k">재료</span></div>
<div class="t" style="left:137px;top:414px;font-size:12px;color:#e8e8e8;font-weight:normal;">ByLayer</div>
<div class="a" style="left:9px;top:432px;width:270px;height:21px;background:#363636;"></div>
<div class="a" style="left:10px;top:432px;width:123px;height:20px;background:#474747;"></div>
<div class="a" style="left:134px;top:432px;width:145px;height:20px;background:#474747;"></div>
<div class="t" style="left:13px;top:435px;font-size:12px;color:#e8e8e8;font-weight:normal;"><span class="k">그림자</span> <span class="k">표시</span></div>
<div class="t" style="left:137px;top:435px;font-size:12px;color:#e8e8e8;font-weight:normal;"><span class="k">그림자</span> <span class="k">및</span> <span class="k">그림자</span> <span class="k">받기</span></div>
<div class="a" style="left:0px;top:453px;width:279px;height:3px;background:#414141;"></div>
<div class="a" style="left:0px;top:456px;width:279px;height:21px;background:#383838;"></div>
<div class="t" style="right:1274px;top:460px;font-size:12px;color:#f0f0f0;font-weight:bold;"><span class="k">플롯</span> <span class="k">스타일</span></div>
<svg style="left:265px;top:465px" width="8" height="4" viewBox="0 0 8 4"><path d="M0 4 L4 0 L8 4 Z" fill="#e0e0e0"/></svg>
<div class="a" style="left:0px;top:477px;width:279px;height:84px;background:#3c3c3c;"></div>
<div class="a" style="left:9px;top:477px;width:270px;height:21px;background:#363636;"></div>
<div class="a" style="left:10px;top:477px;width:123px;height:20px;background:#474747;"></div>
<div class="a" style="left:134px;top:477px;width:145px;height:20px;background:#474747;"></div>
<div class="t" style="left:13px;top:480px;font-size:12px;color:#e8e8e8;font-weight:normal;"><span class="k">플롯</span> <span class="k">스타일</span></div>
<div class="t" style="left:137px;top:480px;font-size:12px;color:#9a9a9a;font-weight:normal;">ByColor</div>
<div class="a" style="left:9px;top:498px;width:270px;height:21px;background:#363636;"></div>
<div class="a" style="left:10px;top:498px;width:123px;height:20px;background:#474747;"></div>
<div class="a" style="left:134px;top:498px;width:145px;height:20px;background:#474747;"></div>
<div class="t" style="left:13px;top:501px;font-size:12px;color:#e8e8e8;font-weight:normal;"><span class="k">플롯</span> <span class="k">스타일</span> <span class="k">테이블</span></div>
<div class="t" style="left:137px;top:501px;font-size:12px;color:#e8e8e8;font-weight:normal;"><span class="k">한빛</span>A3,ctb</div>
<div class="a" style="left:9px;top:519px;width:270px;height:21px;background:#363636;"></div>
<div class="a" style="left:10px;top:519px;width:123px;height:20px;background:#474747;"></div>
<div class="a" style="left:134px;top:519px;width:145px;height:20px;background:#474747;"></div>
<div class="t" style="left:13px;top:522px;font-size:12px;color:#e8e8e8;font-weight:normal;"><span class="k">플롯</span> <span class="k">테이블</span> <span class="k">부착</span> <span class="k">위치</span></div>
<div class="t" style="left:137px;top:522px;font-size:12px;color:#9a9a9a;font-weight:normal;"><span class="k">모형</span></div>
<div class="a" style="left:9px;top:540px;width:270px;height:21px;background:#363636;"></div>
<div class="a" style="left:10px;top:540px;width:123px;height:20px;background:#474747;"></div>
<div class="a" style="left:134px;top:540px;width:145px;height:20px;background:#474747;"></div>
<div class="t" style="left:13px;top:543px;font-size:12px;color:#e8e8e8;font-weight:normal;"><span class="k">플롯</span> <span class="k">테이블</span> <span class="k">유형</span></div>
<div class="t" style="left:137px;top:543px;font-size:12px;color:#9a9a9a;font-weight:normal;"><span class="k">색상</span> <span class="k">상관관계</span></div>
<div class="a" style="left:0px;top:561px;width:279px;height:3px;background:#414141;"></div>
<div class="a" style="left:0px;top:564px;width:279px;height:21px;background:#383838;"></div>
<div class="t" style="right:1319px;top:568px;font-size:12px;color:#f0f0f0;font-weight:bold;"><span class="k">보기</span></div>
<svg style="left:265px;top:573px" width="8" height="4" viewBox="0 0 8 4"><path d="M0 4 L4 0 L8 4 Z" fill="#e0e0e0"/></svg>
<div class="a" style="left:0px;top:585px;width:279px;height:105px;background:#3c3c3c;"></div>
<div class="a" style="left:9px;top:585px;width:270px;height:21px;background:#363636;"></div>
<div class="a" style="left:10px;top:585px;width:123px;height:20px;background:#474747;"></div>
<div class="a" style="left:134px;top:585px;width:145px;height:20px;background:#474747;"></div>
<div class="t" style="left:13px;top:588px;font-size:12px;color:#e8e8e8;font-weight:normal;"><span class="k">중심</span> X</div>
<div class="t" style="left:137px;top:588px;font-size:12px;color:#9a9a9a;font-weight:normal;">-2643371,6559</div>
<div class="a" style="left:9px;top:606px;width:270px;height:21px;background:#363636;"></div>
<div class="a" style="left:10px;top:606px;width:123px;height:20px;background:#474747;"></div>
<div class="a" style="left:134px;top:606px;width:145px;height:20px;background:#474747;"></div>
<div class="t" style="left:13px;top:609px;font-size:12px;color:#e8e8e8;font-weight:normal;"><span class="k">중심</span> Y</div>
<div class="t" style="left:137px;top:609px;font-size:12px;color:#9a9a9a;font-weight:normal;">-3007222,4310</div>
<div class="a" style="left:9px;top:627px;width:270px;height:21px;background:#363636;"></div>
<div class="a" style="left:10px;top:627px;width:123px;height:20px;background:#474747;"></div>
<div class="a" style="left:134px;top:627px;width:145px;height:20px;background:#474747;"></div>
<div class="t" style="left:13px;top:630px;font-size:12px;color:#e8e8e8;font-weight:normal;"><span class="k">중심</span> Z</div>
<div class="t" style="left:137px;top:630px;font-size:12px;color:#9a9a9a;font-weight:normal;">0,0000</div>
<div class="a" style="left:9px;top:648px;width:270px;height:21px;background:#363636;"></div>
<div class="a" style="left:10px;top:648px;width:123px;height:20px;background:#474747;"></div>
<div class="a" style="left:134px;top:648px;width:145px;height:20px;background:#474747;"></div>
<div class="t" style="left:13px;top:651px;font-size:12px;color:#e8e8e8;font-weight:normal;"><span class="k">높이</span></div>
<div class="t" style="left:137px;top:651px;font-size:12px;color:#9a9a9a;font-weight:normal;">901,2317</div>
<div class="a" style="left:9px;top:669px;width:270px;height:21px;background:#363636;"></div>
<div class="a" style="left:10px;top:669px;width:123px;height:20px;background:#474747;"></div>
<div class="a" style="left:134px;top:669px;width:145px;height:20px;background:#474747;"></div>
<div class="t" style="left:13px;top:672px;font-size:12px;color:#e8e8e8;font-weight:normal;"><span class="k">폭</span></div>
<div class="t" style="left:137px;top:672px;font-size:12px;color:#9a9a9a;font-weight:normal;">2146,5147</div>
<div class="a" style="left:0px;top:690px;width:279px;height:3px;background:#414141;"></div>
<div class="a" style="left:0px;top:693px;width:279px;height:21px;background:#383838;"></div>
<div class="t" style="right:1319px;top:697px;font-size:12px;color:#f0f0f0;font-weight:bold;"><span class="k">기타</span></div>
<svg style="left:265px;top:702px" width="8" height="4" viewBox="0 0 8 4"><path d="M0 4 L4 0 L8 4 Z" fill="#e0e0e0"/></svg>
<div class="a" style="left:0px;top:714px;width:279px;height:126px;background:#3c3c3c;"></div>
<div class="a" style="left:9px;top:714px;width:270px;height:21px;background:#363636;"></div>
<div class="a" style="left:10px;top:714px;width:123px;height:20px;background:#474747;"></div>
<div class="a" style="left:134px;top:714px;width:145px;height:20px;background:#474747;"></div>
<div class="t" style="left:13px;top:717px;font-size:12px;color:#e8e8e8;font-weight:normal;"><span class="k">주석</span> <span class="k">축척</span></div>
<div class="t" style="left:137px;top:717px;font-size:12px;color:#e8e8e8;font-weight:normal;">1:1</div>
<div class="a" style="left:9px;top:735px;width:270px;height:21px;background:#363636;"></div>
<div class="a" style="left:10px;top:735px;width:123px;height:20px;background:#474747;"></div>
<div class="a" style="left:134px;top:735px;width:145px;height:20px;background:#474747;"></div>
<div class="t" style="left:13px;top:738px;font-size:12px;color:#e8e8e8;font-weight:normal;">UCS <span class="k">아이콘</span> <span class="k">켜기</span></div>
<div class="t" style="left:137px;top:738px;font-size:12px;color:#e8e8e8;font-weight:normal;"><span class="k">아니오</span></div>
<div class="a" style="left:9px;top:756px;width:270px;height:21px;background:#363636;"></div>
<div class="a" style="left:10px;top:756px;width:123px;height:20px;background:#474747;"></div>
<div class="a" style="left:134px;top:756px;width:145px;height:20px;background:#474747;"></div>
<div class="t" style="left:13px;top:759px;font-size:12px;color:#e8e8e8;font-weight:normal;"><span class="k">원점에</span> UCS <span class="k">아이콘</span></div>
<div class="t" style="left:137px;top:759px;font-size:12px;color:#e8e8e8;font-weight:normal;"><span class="k">예</span></div>
<div class="a" style="left:9px;top:777px;width:270px;height:21px;background:#363636;"></div>
<div class="a" style="left:10px;top:777px;width:123px;height:20px;background:#474747;"></div>
<div class="a" style="left:134px;top:777px;width:145px;height:20px;background:#474747;"></div>
<div class="t" style="left:13px;top:780px;font-size:12px;color:#e8e8e8;font-weight:normal;"><span class="k">뷰포트</span> <span class="k">당</span> UCS</div>
<div class="t" style="left:137px;top:780px;font-size:12px;color:#e8e8e8;font-weight:normal;"><span class="k">예</span></div>
<div class="a" style="left:9px;top:798px;width:270px;height:21px;background:#363636;"></div>
<div class="a" style="left:10px;top:798px;width:123px;height:20px;background:#474747;"></div>
<div class="a" style="left:134px;top:798px;width:145px;height:20px;background:#474747;"></div>
<div class="t" style="left:13px;top:801px;font-size:12px;color:#e8e8e8;font-weight:normal;">UCS <span class="k">이름</span></div>
<div class="t" style="left:137px;top:801px;font-size:12px;color:#9a9a9a;font-weight:normal;">*TOP*</div>
<div class="a" style="left:9px;top:819px;width:270px;height:21px;background:#363636;"></div>
<div class="a" style="left:10px;top:819px;width:123px;height:20px;background:#474747;"></div>
<div class="a" style="left:134px;top:819px;width:145px;height:20px;background:#474747;"></div>
<div class="t" style="left:13px;top:822px;font-size:12px;color:#e8e8e8;font-weight:normal;"><span class="k">비주얼</span> <span class="k">스타일</span></div>
<div class="t" style="left:137px;top:822px;font-size:12px;color:#e8e8e8;font-weight:normal;">2D <span class="k">와이어프레임</span></div>
<div class="a" style="left:0px;top:840px;width:279px;height:3px;background:#414141;"></div>
<div class="a" style="left:0px;top:840px;width:279px;height:63px;background:#474747;"></div>
<div class="a" style="left:279px;top:186px;width:10px;height:721px;background:#353535;"></div>
<div class="a" style="left:288px;top:163px;width:1px;height:744px;background:#303030;"></div>
<div class="a" style="left:289px;top:163px;width:28px;height:744px;background:#373737;"></div>
<div class="a" style="left:293px;top:173px;width:24px;height:452px;background:#3d3d3d;"></div>
<div class="a" style="left:297px;top:165px;width:1px;height:1px;background:#e8e8e8;"></div>
<div class="a" style="left:297px;top:167px;width:1px;height:1px;background:#e8e8e8;"></div>
<div class="a" style="left:299px;top:165px;width:1px;height:1px;background:#e8e8e8;"></div>
<div class="a" style="left:299px;top:167px;width:1px;height:1px;background:#e8e8e8;"></div>
<div class="a" style="left:301px;top:165px;width:1px;height:1px;background:#e8e8e8;"></div>
<div class="a" style="left:301px;top:167px;width:1px;height:1px;background:#e8e8e8;"></div>
<div class="a" style="left:303px;top:165px;width:1px;height:1px;background:#e8e8e8;"></div>
<div class="a" style="left:303px;top:167px;width:1px;height:1px;background:#e8e8e8;"></div>
<div class="a" style="left:305px;top:165px;width:1px;height:1px;background:#e8e8e8;"></div>
<div class="a" style="left:305px;top:167px;width:1px;height:1px;background:#e8e8e8;"></div>
<div class="a" style="left:307px;top:165px;width:1px;height:1px;background:#e8e8e8;"></div>
<div class="a" style="left:307px;top:167px;width:1px;height:1px;background:#e8e8e8;"></div>
<div class="a" style="left:309px;top:165px;width:1px;height:1px;background:#e8e8e8;"></div>
<div class="a" style="left:309px;top:167px;width:1px;height:1px;background:#e8e8e8;"></div>
<div class="a" style="left:311px;top:165px;width:1px;height:1px;background:#e8e8e8;"></div>
<div class="a" style="left:311px;top:167px;width:1px;height:1px;background:#e8e8e8;"></div>
<div class="a" style="left:295px;top:198px;width:20px;height:2px;background:#e0e0e0;"></div>
<div class="a" style="left:295px;top:272px;width:20px;height:2px;background:#e0e0e0;"></div>
<div class="a" style="left:295px;top:368px;width:20px;height:2px;background:#e0e0e0;"></div>
<div class="a" style="left:295px;top:420px;width:20px;height:2px;background:#e0e0e0;"></div>
<div class="a" style="left:295px;top:472px;width:20px;height:2px;background:#e0e0e0;"></div>
<div class="a" style="left:295px;top:524px;width:20px;height:2px;background:#e0e0e0;"></div>
<div class="a" style="left:295px;top:598px;width:20px;height:2px;background:#e0e0e0;"></div>
<svg style="left:297px;top:175px" width="16" height="16" viewBox="0 0 16 16"><path d="M5 1 H13 L15 3 V15 H5 Z" fill="#e8e8f8" stroke="#000" stroke-width="1.2"/><path d="M0 5 L9 3 V9 L1 10 Z" fill="#e8d870" stroke="#000"/><circle cx="9" cy="11" r="3.5" fill="#e8e070" stroke="#000"/><rect x="0" y="8" width="2" height="2" fill="#1a8cff"/></svg>
<svg style="left:297px;top:206px" width="16" height="16" viewBox="0 0 16 16"><rect x="1" y="1" width="14" height="14" fill="#d02828"/><path d="M3 3 H8 V8 H3 Z M8 8 H13 V13 H8 Z" fill="#fff"/><path d="M5 11 L11 5" stroke="#fff" stroke-width="1.5"/><path d="M13 13 L16 16 H13 Z" fill="#ddd"/></svg>
<svg style="left:297px;top:229px" width="16" height="16" viewBox="0 0 16 16"><rect x="0" y="2" width="16" height="10" fill="#e8c8a0" stroke="#000"/><path d="M2 7 H14" stroke="#d02828" stroke-width="1.2" stroke-dasharray="2 1"/><path d="M0 14 H16" stroke="#aab" stroke-width="1.5"/></svg>
<svg style="left:297px;top:250px" width="16" height="16" viewBox="0 0 16 16"><path d="M4 1 Q13 1 13 11 H4 Z" fill="#b0c8e8"/><rect x="0" y="10" width="4" height="4" fill="#f0a0a0"/><rect x="12" y="10" width="4" height="4" fill="#f0a0a0"/></svg>
<svg style="left:297px;top:279px" width="16" height="16" viewBox="0 0 16 16"><rect x="2" y="2" width="12" height="12" fill="#fff" stroke="#000" stroke-width="1.5"/><path d="M5 5 H11 M8 5 V11 M5 11 H11" stroke="#000" stroke-width="1.3"/></svg>
<svg style="left:297px;top:302px" width="16" height="16" viewBox="0 0 16 16"><path d="M1 1 H7 V14 H1 Z M9 1 H15 V14 H9 Z" fill="#e8e8f8"/><path d="M3 1 V11 L7 14 M11 1 V11 L15 14" stroke="#556" stroke-width="1.3" fill="none"/></svg>
<svg style="left:297px;top:325px" width="16" height="16" viewBox="0 0 16 16"><rect x="1" y="2" width="14" height="11" fill="#fff" stroke="#000" stroke-width="1.3"/><rect x="2" y="3" width="12" height="3" fill="#aab8e8"/><path d="M4 8.5 H5 M7 8.5 H8 M10 8.5 H11 M4 11 H5 M7 11 H8 M10 11 H11" stroke="#000"/></svg>
<svg style="left:297px;top:347px" width="16" height="16" viewBox="0 0 16 16"><path d="M0 2 H16 M0 14 H16 M2 0 V16 M14 0 V16" stroke="#e8e8f8" stroke-width="1.5"/><rect x="3" y="3" width="10" height="10" fill="#c8d0f8"/><path d="M3 5.5 H13 M3 8 H13 M3 10.5 H13" stroke="#fff"/></svg>
<svg style="left:297px;top:376px" width="16" height="16" viewBox="0 0 16 16"><path d="M3 3 H9 Q8 9 3 12 M10 1 V14 M10 7 H14" stroke="#7a7a9a" stroke-width="1.3" fill="none"/><path d="M12 16 L16 12 V16 Z" fill="#ddd"/></svg>
<svg style="left:297px;top:398px" width="16" height="16" viewBox="0 0 16 16"><path d="M1 7 L4 4 M1 7 L4 10 M1 7 H6" stroke="#a0a0ff" stroke-width="1.5" fill="none"/><path d="M2 15 L5.5 9 L9 15 M3.5 13 H7.5" stroke="#000" stroke-width="1.5" fill="none"/><path d="M8 8 L11.5 1 L15 8" stroke="#ccc" stroke-dasharray="1 1" fill="none"/><path d="M12 16 L16 12 V16 Z" fill="#ddd"/></svg>
<svg style="left:297px;top:430px" width="16" height="16" viewBox="0 0 16 16"><path d="M1 2 V14 M1 8 H11 M8 5 L11 8 L8 11" stroke="#000" stroke-width="1.5" fill="none"/><path d="M6 13 L15 3" stroke="#ddd" stroke-width="1.6"/></svg>
<svg style="left:297px;top:450px" width="16" height="16" viewBox="0 0 16 16"><path d="M3 12 L8 2 L13 12" stroke="#3a7fd0" stroke-width="1.4" stroke-dasharray="1.5 1" fill="none"/><path d="M1 16 V11 M15 16 V11 M1 14 H15" stroke="#000" stroke-width="1.5"/><rect x="12" y="0" width="4" height="4" fill="#e03030"/></svg>
<svg style="left:297px;top:480px" width="16" height="16" viewBox="0 0 16 16"><rect x="1" y="1" width="14" height="12" fill="#fff"/><rect x="10" y="1" width="5" height="12" fill="#3a5fbf"/><path d="M11 4 H14 M11 7 H14 M11 10 H14" stroke="#fff"/><rect x="0" y="12" width="3" height="3" fill="#e03030"/></svg>
<svg style="left:297px;top:502px" width="16" height="16" viewBox="0 0 16 16"><rect x="3" y="1" width="11" height="14" fill="#e8e8f8"/><path d="M4 4 L10 8 L4 12" stroke="#000" stroke-width="1.3" fill="none"/><rect x="1" y="13" width="3" height="3" fill="#e03030"/></svg>
<svg style="left:297px;top:532px" width="16" height="16" viewBox="0 0 16 16"><path d="M3 6 Q8 -1 13 6 L10 8 V12 H4 Z" fill="#3a4fa0"/><path d="M3 8 H14 V12 H3 Z" fill="#d8d8f0"/><path d="M1 14 Q4 10 8 12" stroke="#223" fill="none"/></svg>
<svg style="left:297px;top:554px" width="16" height="16" viewBox="0 0 16 16"><path d="M0 14 L4 4 L8 14 M2 10 H6" stroke="#000" stroke-width="1.6" fill="none"/><path d="M7 13 L14 2 L16 4 L9 15 Z" fill="#f0f0f0" stroke="#444" stroke-width="0.6"/><path d="M13 1 L16 3" stroke="#f0e040" stroke-width="2"/></svg>
<svg style="left:297px;top:576px" width="16" height="16" viewBox="0 0 16 16"><rect x="0" y="1" width="16" height="15" fill="#d8d8d8"/><path d="M1 5 H4 M1 8 H4 M1 11 H4 M12 5 H15 M12 8 H15 M12 11 H15" stroke="#9a9ae8" stroke-dasharray="1 1"/><rect x="5.5" y="3" width="5" height="11" fill="#e0e0e0" stroke="#000" stroke-width="1.2"/></svg>
<svg style="left:297px;top:606px" width="16" height="16" viewBox="0 0 16 16"><rect x="0" y="0" width="4" height="4" fill="#e04070"/><rect x="12" y="0" width="4" height="4" fill="#e04070"/><circle cx="3" cy="9" r="3" fill="#f8f0a0"/><rect x="0" y="12" width="4" height="4" fill="#1a8cff"/><path d="M7 9 L10 6 L12 9 L10 13 Z" fill="#b0c0e8" stroke="#000"/><rect x="12" y="12" width="4" height="4" fill="#1a8cff"/></svg>
<svg style="left:309px;top:221px" width="5" height="5" viewBox="0 0 5 5"><path d="M0 5 L5 0 V5 Z" fill="#dcdcdc"/></svg>
<svg style="left:309px;top:244px" width="5" height="5" viewBox="0 0 5 5"><path d="M0 5 L5 0 V5 Z" fill="#dcdcdc"/></svg>
<svg style="left:309px;top:294px" width="5" height="5" viewBox="0 0 5 5"><path d="M0 5 L5 0 V5 Z" fill="#dcdcdc"/></svg>
<svg style="left:309px;top:317px" width="5" height="5" viewBox="0 0 5 5"><path d="M0 5 L5 0 V5 Z" fill="#dcdcdc"/></svg>
<svg style="left:309px;top:340px" width="5" height="5" viewBox="0 0 5 5"><path d="M0 5 L5 0 V5 Z" fill="#dcdcdc"/></svg>
<svg style="left:309px;top:362px" width="5" height="5" viewBox="0 0 5 5"><path d="M0 5 L5 0 V5 Z" fill="#dcdcdc"/></svg>
<svg style="left:309px;top:445px" width="5" height="5" viewBox="0 0 5 5"><path d="M0 5 L5 0 V5 Z" fill="#dcdcdc"/></svg>
<svg style="left:309px;top:466px" width="5" height="5" viewBox="0 0 5 5"><path d="M0 5 L5 0 V5 Z" fill="#dcdcdc"/></svg>
<svg style="left:309px;top:495px" width="5" height="5" viewBox="0 0 5 5"><path d="M0 5 L5 0 V5 Z" fill="#dcdcdc"/></svg>
<svg style="left:309px;top:518px" width="5" height="5" viewBox="0 0 5 5"><path d="M0 5 L5 0 V5 Z" fill="#dcdcdc"/></svg>
<svg style="left:309px;top:569px" width="5" height="5" viewBox="0 0 5 5"><path d="M0 5 L5 0 V5 Z" fill="#dcdcdc"/></svg>
<svg style="left:309px;top:591px" width="5" height="5" viewBox="0 0 5 5"><path d="M0 5 L5 0 V5 Z" fill="#dcdcdc"/></svg>
<div class="a" style="left:317px;top:163px;width:1019px;height:22px;background:#414141;"></div>
<svg style="left:322px;top:169px" width="6" height="10" viewBox="0 0 6 10"><path d="M5.5 0.5 L0.8 5 L5.5 9.5 Z" fill="none" stroke="#6a6a6a"/></svg>
<svg style="left:332px;top:164px" width="100" height="21" viewBox="0 0 100 21"><path d="M0 21 C4 14 7 5 13 1 H100 V21 Z" fill="#484848"/><path d="M0 21 C4 14 7 5 13 1" stroke="#262626" stroke-width="1.2" fill="none"/></svg>
<div class="t" style="left:344px;top:168px;font-size:12px;color:#e0e0e0;font-weight:normal;letter-spacing:-0.5px">Drawing1.DWG</div>
<svg style="left:428px;top:164px" width="197" height="21" viewBox="0 0 197 21"><path d="M0 21 C3 12 5 3 12 1 H185 C190 1 192 8 197 21 Z" fill="#2f2f2f"/></svg>
<div class="t" style="left:437px;top:168px;font-size:12px;color:#f2f2f2;font-weight:bold;letter-spacing:-0.2px">20250221-<span class="k">중구리</span> <span class="k">마을회관</span>.dwg</div>
<svg style="left:611px;top:171px" width="9" height="9" viewBox="0 0 9 9"><path d="M0.5 0.5 L8.5 8.5 M8.5 0.5 L0.5 8.5" stroke="#9a9a9a" stroke-width="1.2"/></svg>
<div class="a" style="left:316px;top:185px;width:1020px;height:622px;background:#2c2c2c;"></div>
<div class="a" style="left:317px;top:185px;width:1019px;height:621px;background:#494949;"></div>
<div class="a" style="left:319px;top:185px;width:1017px;height:619px;background:#a0a0a0;"></div>
<div class="a" style="left:320px;top:186px;width:1016px;height:616px;background:#6c6c6c;"></div>
<div class="a" style="left:321px;top:187px;width:1015px;height:614px;background:#a0a0a0;"></div>
<div class="a" style="left:322px;top:188px;width:1014px;height:593px;background:#8a8a8a;"></div>
<div class="a" style="left:323px;top:189px;width:1013px;height:592px;background:#000;"></div>
<div class="a" style="left:589px;top:189px;width:1px;height:592px;background:#e6e27a;"></div>
<div class="a" style="left:655px;top:189px;width:1px;height:592px;background:#c83232;"></div>
<div class="a" style="left:720px;top:189px;width:2px;height:592px;background:#18189a;"></div>
<div class="a" style="left:323px;top:499px;width:1013px;height:1px;background:#f4f4f4;"></div>
<div class="a" style="left:710px;top:489px;width:2px;height:21px;background:#22b022;"></div>
<div class="a" style="left:710px;top:508px;width:21px;height:2px;background:#22b022;"></div>
<div class="a" style="left:712px;top:499px;width:8px;height:1px;background:#b8b8b8;"></div>
<div class="a" style="left:720px;top:500px;width:2px;height:8px;background:#b8b8b8;"></div>
<div class="a" style="left:321px;top:781px;width:1015px;height:2px;background:#f4f4f4;"></div>
<div class="a" style="left:321px;top:783px;width:1015px;height:19px;background:#424242;"></div>
<div class="a" style="left:319px;top:802px;width:1017px;height:2px;background:#f4f4f4;"></div>
<div class="a" style="left:317px;top:804px;width:1019px;height:2px;background:#4a4a4a;"></div>
<svg style="left:372px;top:783px" width="115" height="17" viewBox="0 0 115 17"><path d="M36 0.5 L43.5 16.5 H75 L83 0.5" fill="none" stroke="#5e5e5e"/><path d="M77 0.5 L84.5 16.5 H104 L111 0.5" fill="none" stroke="#5e5e5e"/><path d="M0.5 0 L9 16.5 H35 L42.5 0 Z" fill="#262626" stroke="#5e5e5e"/></svg>
<div class="t" style="left:383px;top:785px;font-size:12px;color:#f0f0f0;font-weight:bold;"><span class="k">모형</span></div>
<div class="t" style="left:417px;top:785px;font-size:12px;color:#d8d8d8;font-weight:bold;"><span class="k">배치</span>1</div>
<div class="t" style="left:461px;top:785px;font-size:12px;color:#d8d8d8;font-weight:bold;">+</div>
<div class="a" style="left:317px;top:806px;width:1019px;height:101px;background:#343434;"></div>
<div class="a" style="left:322px;top:813px;width:1px;height:1px;background:#e8e8e8;"></div>
<div class="a" style="left:322px;top:816px;width:1px;height:1px;background:#e8e8e8;"></div>
<div class="a" style="left:324px;top:813px;width:1px;height:1px;background:#e8e8e8;"></div>
<div class="a" style="left:324px;top:816px;width:1px;height:1px;background:#e8e8e8;"></div>
<div class="a" style="left:326px;top:813px;width:1px;height:1px;background:#e8e8e8;"></div>
<div class="a" style="left:326px;top:816px;width:1px;height:1px;background:#e8e8e8;"></div>
<div class="a" style="left:328px;top:813px;width:1px;height:1px;background:#e8e8e8;"></div>
<div class="a" style="left:328px;top:816px;width:1px;height:1px;background:#e8e8e8;"></div>
<div class="a" style="left:330px;top:813px;width:1px;height:1px;background:#e8e8e8;"></div>
<div class="a" style="left:330px;top:816px;width:1px;height:1px;background:#e8e8e8;"></div>
<div class="a" style="left:332px;top:813px;width:1px;height:1px;background:#e8e8e8;"></div>
<div class="a" style="left:332px;top:816px;width:1px;height:1px;background:#e8e8e8;"></div>
<div class="a" style="left:334px;top:813px;width:1px;height:1px;background:#e8e8e8;"></div>
<div class="a" style="left:334px;top:816px;width:1px;height:1px;background:#e8e8e8;"></div>
<svg style="left:321px;top:823px" width="12" height="12" viewBox="0 0 12 12"><path d="M0.5 0.5 L11.5 11.5 M11.5 0.5 L0.5 11.5" stroke="#d0d0d0" stroke-width="1.3"/></svg>
<svg style="left:320px;top:844px" width="14" height="14" viewBox="0 0 14 14"><path d="M1.5 12.5 L2 9 L9 2 Q10 1 11 2 L12 3 Q13 4 12 5 L5 12 Z M8 3 L11 6" fill="none" stroke="#d0d0d0" stroke-width="1.1"/><path d="M8 10.5 H13 M9 12.5 H14" stroke="#d0d0d0" stroke-width="1"/></svg>
<div class="a" style="left:339px;top:811px;width:997px;height:96px;background:#8a8a8a;"></div>
<div class="a" style="left:340px;top:812px;width:996px;height:95px;background:#484848;"></div>
<div class="a" style="left:340px;top:889px;width:996px;height:1px;background:#7a7a7a;"></div>
<div class="t" style="left:343px;top:821px;font-size:11.7px;color:#28d4d4;font-weight:normal;font-family:'Liberation Mono',monospace;">WindowPlanDraw</div>
<div class="t" style="left:343px;top:839px;font-size:11.7px;color:#28d4d4;font-weight:normal;font-family:'Liberation Mono',monospace;">&gt;&gt; Window Plan Draw</div>
<div class="t" style="left:343px;top:857px;font-size:11.7px;color:#28d4d4;font-weight:normal;font-family:'Liberation Mono',monospace;"><span class="km">대화상자</span>(D)/<span class="km">취소</span>(U)/&lt;<span class="km">내벽</span> <span class="km">기준점</span>&gt;:</div>
<div class="t" style="left:343px;top:875px;font-size:11.7px;color:#28d4d4;font-weight:normal;font-family:'Liberation Mono',monospace;">&lt;*ERROR*&gt; <span class="km">벽체선이</span> <span class="km">존재하지</span> <span class="km">않습니다</span>.</div>
<div class="t" style="left:343px;top:895px;font-size:11.7px;color:#28d4d4;font-weight:normal;font-family:'Liberation Mono',monospace;"><span class="km">대화상자</span>(D)/<span class="km">취소</span>(U)/&lt;<span class="km">내벽</span> <span class="km">기준점</span>&gt;:</div>
</body></html>
